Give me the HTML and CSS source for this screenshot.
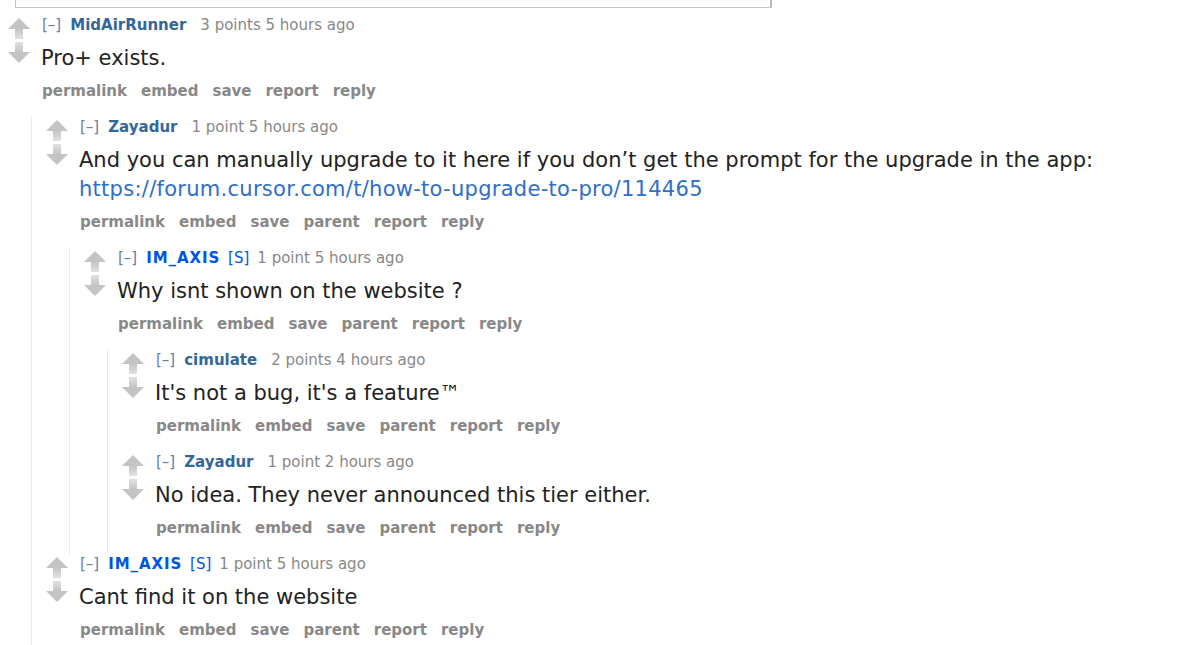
FILE: index.html
```html
<!DOCTYPE html>
<html>
<head>
<meta charset="utf-8">
<link rel="stylesheet" href="styles.css">
</head>
<body>
<div class="editbox"></div>

<div class="comment">
  <div class="row">
    <div class="midcol">
      <svg class="arrow" width="22" height="21" viewBox="0 0 22 21"><defs><linearGradient id="gu" x1="0" y1="0" x2="0" y2="1"><stop offset="0" stop-color="#c4c4c4"/><stop offset="1" stop-color="#e2e2e2"/></linearGradient><linearGradient id="gd" x1="0" y1="0" x2="0" y2="1"><stop offset="0" stop-color="#e2e2e2"/><stop offset="1" stop-color="#c4c4c4"/></linearGradient></defs><path d="M11 0 L22 11 L0 11 Z" fill="#c4c4c4"/><rect x="7" y="11" width="8" height="10" fill="url(#gu)"/></svg>
      <svg class="arrow down" width="22" height="21" viewBox="0 0 22 21"><rect x="7" y="0" width="8" height="10" fill="url(#gd)"/><path d="M0 10 L22 10 L11 21 Z" fill="#c4c4c4"/></svg>
    </div>
    <div class="entry">
      <p class="tagline"><span class="expand">[–]</span><a class="author">MidAirRunner</a><span class="score">3 points 5 hours ago</span></p>
      <p class="md">Pro+ exists.</p>
      <ul class="buttons"><li>permalink</li><li>embed</li><li>save</li><li>report</li><li>reply</li></ul>
    </div>
  </div>
  <div class="child">

    <div class="comment">
      <div class="row">
        <div class="midcol">
          <svg class="arrow" width="22" height="21" viewBox="0 0 22 21"><path d="M11 0 L22 11 L0 11 Z" fill="#c4c4c4"/><rect x="7" y="11" width="8" height="10" fill="url(#gu)"/></svg>
          <svg class="arrow down" width="22" height="21" viewBox="0 0 22 21"><rect x="7" y="0" width="8" height="10" fill="url(#gd)"/><path d="M0 10 L22 10 L11 21 Z" fill="#c4c4c4"/></svg>
        </div>
        <div class="entry">
          <p class="tagline"><span class="expand">[–]</span><a class="author">Zayadur</a><span class="score">1 point 5 hours ago</span></p>
          <p class="md">And you can manually upgrade to it here if you don’t get the prompt for the upgrade in the app:<br><a class="link">https://forum.cursor.com/t/how-to-upgrade-to-pro/114465</a></p>
          <ul class="buttons"><li>permalink</li><li>embed</li><li>save</li><li>parent</li><li>report</li><li>reply</li></ul>
        </div>
      </div>
      <div class="child">

        <div class="comment">
          <div class="row">
            <div class="midcol">
              <svg class="arrow" width="22" height="21" viewBox="0 0 22 21"><path d="M11 0 L22 11 L0 11 Z" fill="#c4c4c4"/><rect x="7" y="11" width="8" height="10" fill="url(#gu)"/></svg>
              <svg class="arrow down" width="22" height="21" viewBox="0 0 22 21"><rect x="7" y="0" width="8" height="10" fill="url(#gd)"/><path d="M0 10 L22 10 L11 21 Z" fill="#c4c4c4"/></svg>
            </div>
            <div class="entry">
              <p class="tagline"><span class="expand">[–]</span><a class="author submitter">IM_AXIS</a><span class="attr">[S]</span><span class="score after-attr">1 point 5 hours ago</span></p>
              <p class="md">Why isnt shown on the website ?</p>
              <ul class="buttons"><li>permalink</li><li>embed</li><li>save</li><li>parent</li><li>report</li><li>reply</li></ul>
            </div>
          </div>
          <div class="child">

            <div class="comment">
              <div class="row">
                <div class="midcol">
                  <svg class="arrow" width="22" height="21" viewBox="0 0 22 21"><path d="M11 0 L22 11 L0 11 Z" fill="#c4c4c4"/><rect x="7" y="11" width="8" height="10" fill="url(#gu)"/></svg>
                  <svg class="arrow down" width="22" height="21" viewBox="0 0 22 21"><rect x="7" y="0" width="8" height="10" fill="url(#gd)"/><path d="M0 10 L22 10 L11 21 Z" fill="#c4c4c4"/></svg>
                </div>
                <div class="entry">
                  <p class="tagline"><span class="expand">[–]</span><a class="author">cimulate</a><span class="score">2 points 4 hours ago</span></p>
                  <p class="md">It's not a bug, it's a feature™</p>
                  <ul class="buttons"><li>permalink</li><li>embed</li><li>save</li><li>parent</li><li>report</li><li>reply</li></ul>
                </div>
              </div>
            </div>

            <div class="comment">
              <div class="row">
                <div class="midcol">
                  <svg class="arrow" width="22" height="21" viewBox="0 0 22 21"><path d="M11 0 L22 11 L0 11 Z" fill="#c4c4c4"/><rect x="7" y="11" width="8" height="10" fill="url(#gu)"/></svg>
                  <svg class="arrow down" width="22" height="21" viewBox="0 0 22 21"><rect x="7" y="0" width="8" height="10" fill="url(#gd)"/><path d="M0 10 L22 10 L11 21 Z" fill="#c4c4c4"/></svg>
                </div>
                <div class="entry">
                  <p class="tagline"><span class="expand">[–]</span><a class="author">Zayadur</a><span class="score">1 point 2 hours ago</span></p>
                  <p class="md">No idea. They never announced this tier either.</p>
                  <ul class="buttons"><li>permalink</li><li>embed</li><li>save</li><li>parent</li><li>report</li><li>reply</li></ul>
                </div>
              </div>
            </div>

          </div>
        </div>

      </div>
    </div>

    <div class="comment">
      <div class="row">
        <div class="midcol">
          <svg class="arrow" width="22" height="21" viewBox="0 0 22 21"><path d="M11 0 L22 11 L0 11 Z" fill="#c4c4c4"/><rect x="7" y="11" width="8" height="10" fill="url(#gu)"/></svg>
          <svg class="arrow down" width="22" height="21" viewBox="0 0 22 21"><rect x="7" y="0" width="8" height="10" fill="url(#gd)"/><path d="M0 10 L22 10 L11 21 Z" fill="#c4c4c4"/></svg>
        </div>
        <div class="entry">
          <p class="tagline"><span class="expand">[–]</span><a class="author submitter">IM_AXIS</a><span class="attr">[S]</span><span class="score after-attr">1 point 5 hours ago</span></p>
          <p class="md">Cant find it on the website</p>
          <ul class="buttons"><li>permalink</li><li>embed</li><li>save</li><li>parent</li><li>report</li><li>reply</li></ul>
        </div>
      </div>
    </div>

  </div>
</div>
</body>
</html>
```

FILE: styles.css
```css
html, body {
  margin: 0;
  padding: 0;
  background: #ffffff;
}
body {
  padding-left: 8px;
  font-family: "DejaVu Sans", Verdana, sans-serif;
  color: #222222;
  overflow: hidden;
}
.editbox {
  margin-left: 7px;
  width: 754px;
  height: 7px;
  border: 1px solid #c4c4c4;
  border-top: none;
  border-right: 2px solid #b8b8b8;
  margin-bottom: 7px;
}
.row {
  display: flex;
  padding-bottom: 16px;
}
.midcol {
  width: 34px;
  flex: none;
  display: flex;
  flex-direction: column;
  padding-top: 3px;
}
.arrow {
  display: block;
}
.arrow.down {
  margin-top: 3px;
}
.entry {
  flex: 1;
  min-width: 0;
}
.tagline {
  margin: 0;
  font-size: 15px;
  line-height: 20px;
  color: #888888;
  white-space: nowrap;
}
.expand {
  color: #6b7f9e;
}
.author {
  font-weight: bold;
  color: #336699;
  margin-left: 9px;
}
.author.submitter {
  color: #0055df;
  letter-spacing: 0.9px;
}
.attr {
  color: #0055df;
  margin-left: 8px;
}
.score {
  margin-left: 14px;
}
.score.after-attr {
  margin-left: 8px;
}
.md {
  margin: 9px 0 0 -1px;
  font-size: 21px;
  line-height: 29px;
  color: #222222;
}
.link {
  color: #2f6ec9;
  letter-spacing: 0.28px;
}
.buttons {
  list-style: none;
  margin: 8px 0 0;
  padding: 0;
  display: flex;
  gap: 14px;
  font-size: 15px;
  line-height: 20px;
  font-weight: bold;
  color: #888888;
}
.child {
  margin-left: 23px;
  border-left: 1px solid #e8e8f0;
  padding-left: 14px;
}
```
